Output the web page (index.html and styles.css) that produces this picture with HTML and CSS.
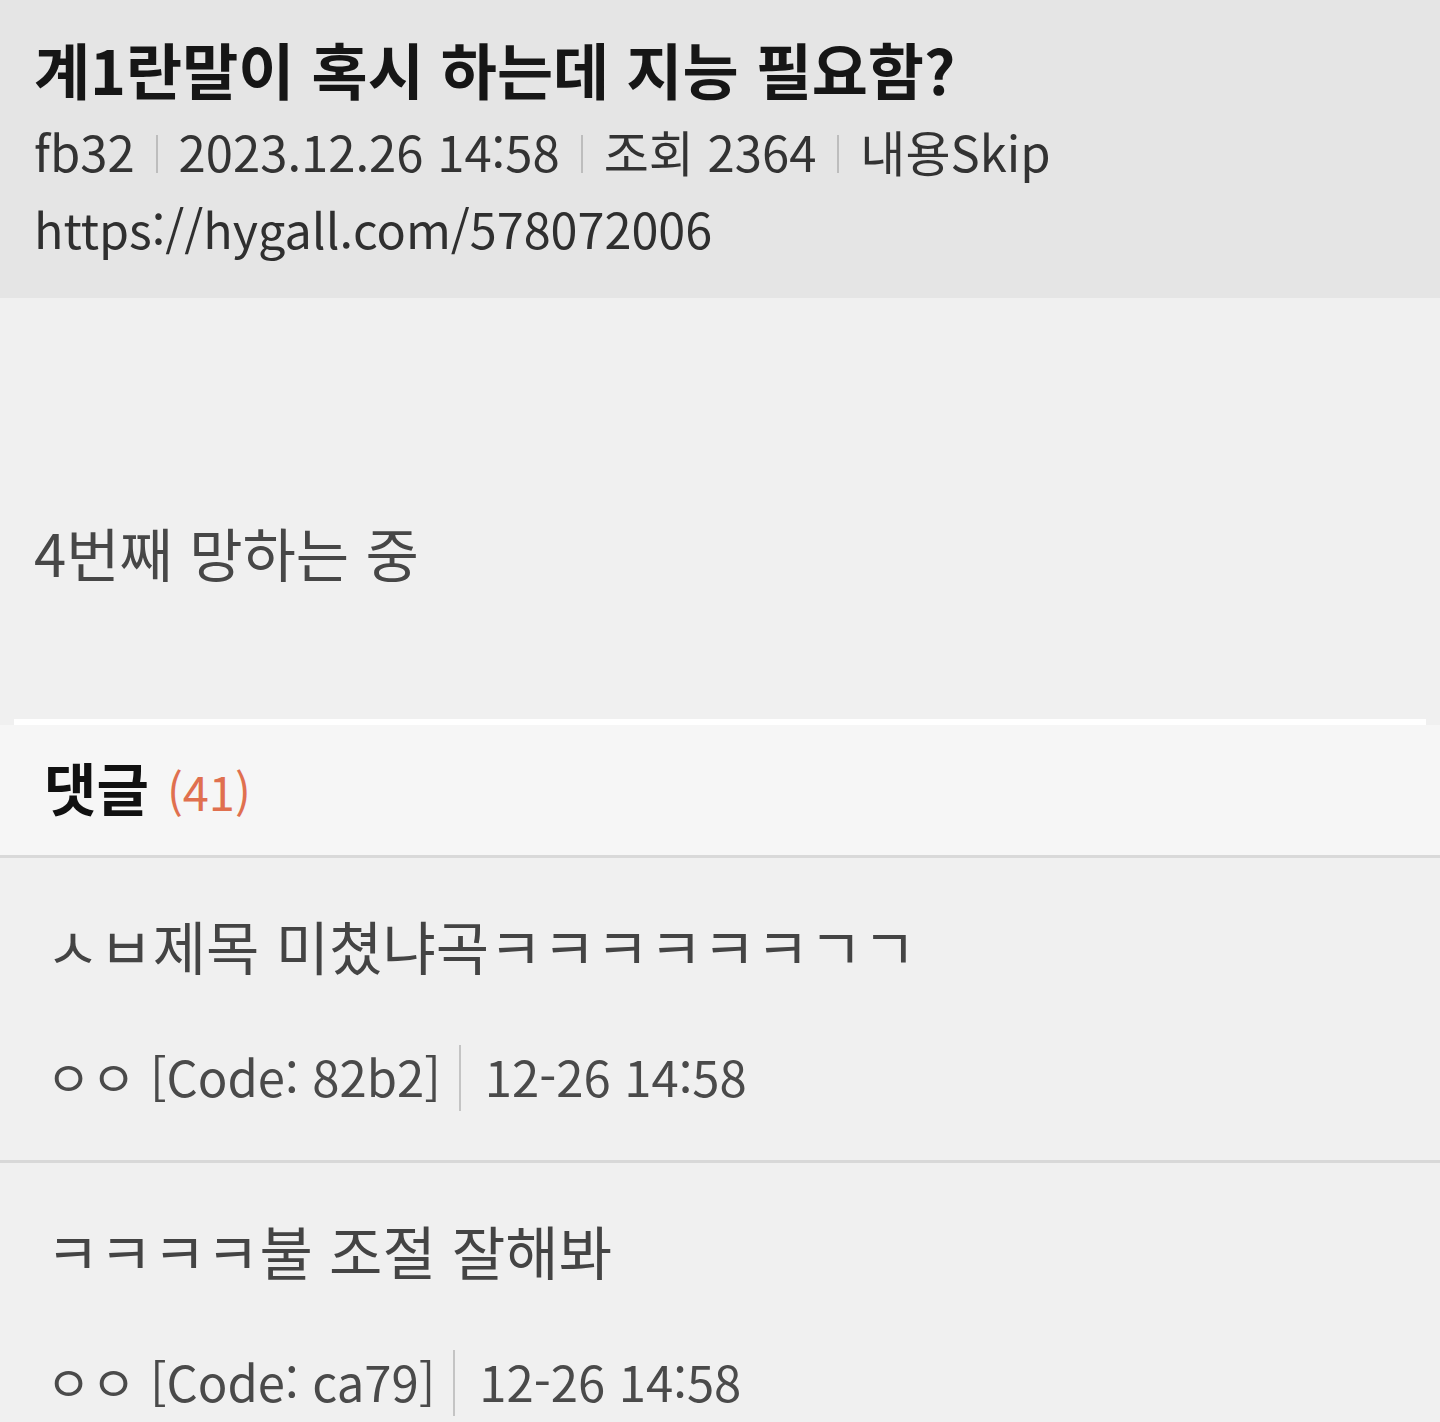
FILE: index.html
```html
<!DOCTYPE html>
<html lang="ko">
<head>
<meta charset="utf-8">
<title>계1란말이 혹시 하는데 지능 필요함?</title>
<link rel="stylesheet" href="styles.css">
</head>
<body>
<div class="page">
  <header class="post-head">
    <h1 class="title">계1란말이 혹시 하는데 지능 필요함?</h1>
    <div class="meta">
      <span>fb32</span><i class="bar"></i><span>2023.12.26 14:58</span><i class="bar"></i><span>조회 2364</span><i class="bar"></i><span>내용Skip</span>
    </div>
    <div class="url">https://hygall.com/578072006</div>
  </header>
  <section class="post-body">
    <p class="content">4번째 망하는 중</p>
  </section>
  <div class="divider"></div>
  <div class="cmt-head">
    <span class="cmt-label">댓글</span><span class="cmt-count">(41)</span>
  </div>
  <ul class="comments">
    <li class="comment">
      <p class="cmt-text">ㅅㅂ제목 미쳤냐곡ㅋㅋㅋㅋㅋㅋㄱㄱ</p>
      <div class="cmt-meta"><span>ㅇㅇ [Code: 82b2]</span><i class="vbar"></i><span>12-26 14:58</span></div>
    </li>
    <li class="comment">
      <p class="cmt-text">ㅋㅋㅋㅋ불 조절 잘해봐</p>
      <div class="cmt-meta"><span>ㅇㅇ [Code: ca79]</span><i class="vbar"></i><span>12-26 14:58</span></div>
    </li>
  </ul>
</div>
</body>
</html>
```

FILE: styles.css
```css
* { box-sizing: border-box; }
html, body { margin: 0; padding: 0; }
body {
  background: #f0f0f0;
  font-family: "Noto Sans CJK KR", "Noto Sans", sans-serif;
  width: 1440px;
  height: 1422px;
  overflow: hidden;
}
.page { display: flex; flex-direction: column; }

.post-head {
  background: #e5e5e5;
  height: 298px;
  padding: 35px 0 0 34px;
}
.title {
  margin: 0;
  font-size: 61px;
  line-height: 68px;
  font-weight: 700;
  color: #161616;
}
.meta {
  margin-top: 9px;
  display: flex;
  align-items: center;
  font-size: 49px;
  line-height: 78px;
  color: #333;
}
.bar {
  display: block;
  width: 2px;
  height: 38px;
  background: #bdbdbd;
  margin: 6px 21px 0 21px;
}
.url {
  font-size: 48.5px;
  line-height: 76px;
  color: #2f2f2f;
}

.post-body {
  height: 421px;
  padding: 220px 0 0 34px;
}
.content {
  margin: 0;
  font-size: 58px;
  line-height: 68px;
  color: #474747;
}

.divider {
  height: 6px;
  margin: 0 14px;
  background: #ffffff;
}

.cmt-head {
  height: 133px;
  background: #f6f6f6;
  border-bottom: 3px solid #d9d9d9;
  padding: 26px 0 0 44px;
  display: flex;
  align-items: baseline;
}
.cmt-label {
  font-size: 57px;
  line-height: 70px;
  font-weight: 700;
  color: #111;
}
.cmt-count {
  font-size: 47px;
  line-height: 70px;
  color: #e0704f;
  margin-left: 18px;
}

.comments { list-style: none; margin: 0; padding: 0; }
.comment {
  padding: 53px 0 50px 46px;
  border-bottom: 3px solid #d8d8d8;
}
.cmt-text {
  margin: 0;
  font-size: 58px;
  line-height: 68px;
  color: #444;
}
.cmt-meta {
  margin-top: 61px;
  display: flex;
  align-items: center;
  height: 70px;
  font-size: 49px;
  color: #4a4a4a;
}
.vbar {
  display: block;
  width: 2px;
  height: 66px;
  background: #c4c4c4;
  margin: 6px 24px 0 18px;
}
```
